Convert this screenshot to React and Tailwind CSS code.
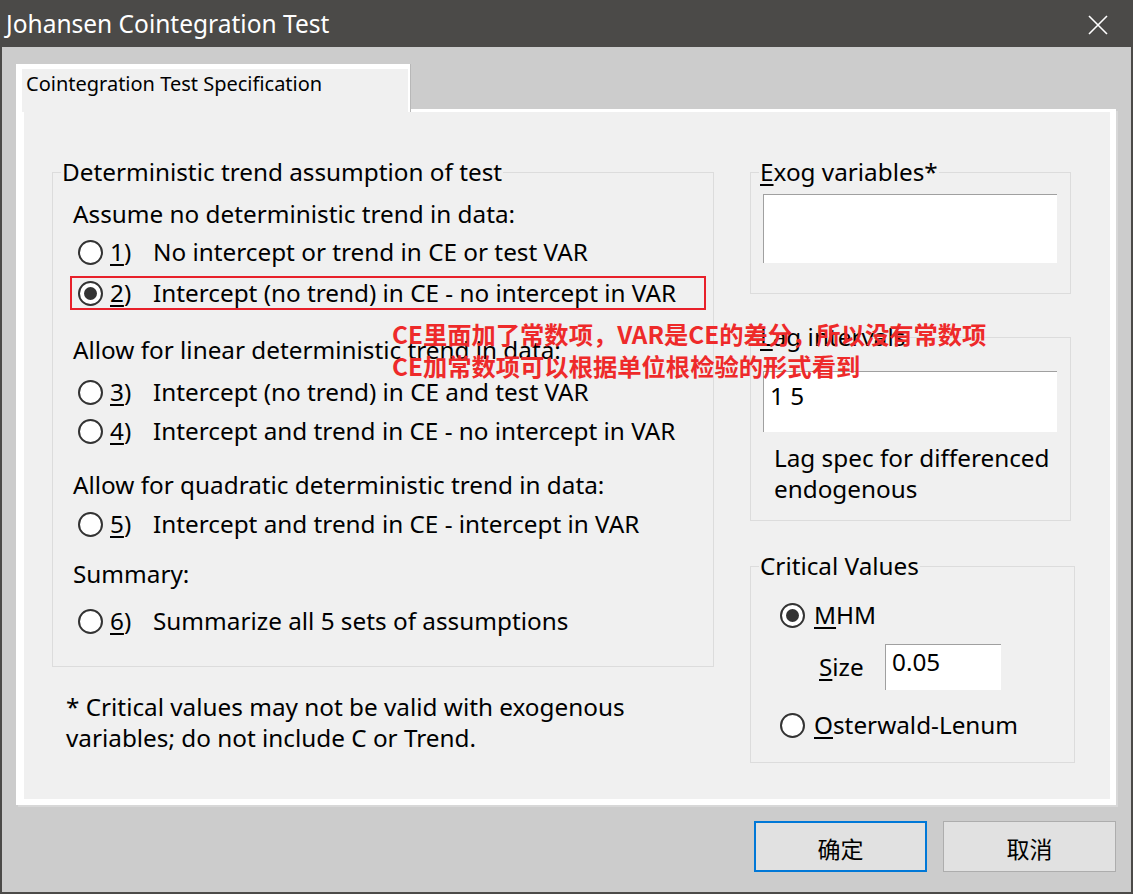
import React from 'react';

const Radio = ({ checked }) => (
  <span className="flex h-[25px] w-[25px] shrink-0 items-center justify-center rounded-full border-2 border-[#333333] bg-white">
    {checked && <span className="h-[13px] w-[13px] rounded-full bg-[#333333]" />}
  </span>
);

const Option = ({ n, label, checked, className = '' }) => (
  <div className={`flex h-[30px] items-center ${className}`}>
    <Radio checked={checked} />
    <span className="ml-[7px] w-[43px]">
      <span className="underline underline-offset-[3px]">{n}</span>)
    </span>
    <span>{label}</span>
  </div>
);

const GroupBox = ({ title, className = '', children }) => (
  <fieldset className={`border border-[#dcdcdc] px-0 ${className}`}>
    <legend className="ml-[8px] h-[30px] px-px leading-[30px]">{title}</legend>
    {children}
  </fieldset>
);

const App = () => {
  return (
    <div className="flex h-[894px] w-[1133px] flex-col bg-[#4b4a48] font-['Noto_Sans','Open_Sans',sans-serif] text-[24.3px] text-black">
      {/* title bar */}
      <div className="flex h-[47px] shrink-0 items-center justify-between pl-[6px] pr-[25px] pt-[2px] text-[24.5px] text-white">
        <span>Johansen Cointegration Test</span>
        <svg width="20" height="20" viewBox="0 0 20 20" stroke="white" strokeWidth="1.6">
          <path d="M1 1 L19 19 M19 1 L1 19" />
        </svg>
      </div>

      <div className="mx-[2px] mb-[2px] flex flex-1 flex-col bg-[#cccccc] pl-[14px] pr-[15px] pt-[17px]">
        {/* tab */}
        <div className="relative z-10 -mb-[3px] h-[48px] w-[394px] border-l-[6px] border-r-2 border-t-[5px] border-white bg-[#f0f0f0] shadow-[1px_0_0_#b8b8b8]">
          <div className="pl-[4px] pt-[1px] text-[20px] leading-[28px]">Cointegration Test Specification</div>
        </div>

        {/* panel */}
        <div className="relative flex h-[696px] border-b-[6px] border-l-[8px] border-r-[6px] border-t-[3px] border-white bg-[#f0f0f0] pl-[28px] pt-[45px] shadow-[2px_2px_0_#d8d8d8]">
          {/* left column */}
          <div className="flex w-[662px] flex-col">
            <GroupBox title="Deterministic trend assumption of test" className="pb-[30px]">
              <div className="ml-[20px] mt-[12px] flex h-[30px] items-center">Assume no deterministic trend in data:</div>
              <Option n="1" label="No intercept or trend in CE or test VAR" className="ml-[25px] mt-[8px]" />
              <div className="ml-[17px] mt-[9px] w-[636px] border-2 border-[#e8202a] pl-[6px]">
                <Option n="2" label="Intercept (no trend) in CE - no intercept in VAR" checked className="h-[29px]" />
              </div>
              <div className="ml-[20px] mt-[25px] flex h-[30px] items-center">Allow for linear deterministic trend in data:</div>
              <Option n="3" label="Intercept (no trend) in CE and test VAR" className="ml-[25px] mt-[12px]" />
              <Option n="4" label="Intercept and trend in CE - no intercept in VAR" className="ml-[25px] mt-[9px]" />
              <div className="ml-[20px] mt-[24px] flex h-[30px] items-center">Allow for quadratic deterministic trend in data:</div>
              <Option n="5" label="Intercept and trend in CE - intercept in VAR" className="ml-[25px] mt-[9px]" />
              <div className="ml-[20px] mt-[20px] flex h-[30px] items-center">Summary:</div>
              <Option n="6" label="Summarize all 5 sets of assumptions" className="ml-[25px] mt-[17px]" />
            </GroupBox>
            <p className="ml-[14px] mt-[24px] leading-[31px]">
              * Critical values may not be valid with exogenous
              <br />
              variables; do not include C or Trend.
            </p>
          </div>

          {/* right column */}
          <div className="ml-[36px] flex flex-col">
            <GroupBox title={<><span className="underline underline-offset-[3px]">E</span>xog variables*</>} className="w-[321px] pb-[30px]">
              <div className="ml-[12px] mt-[7px] h-[69px] w-[294px] border-l border-t border-[#a0a0a0] bg-white" />
            </GroupBox>
            <GroupBox title={<><span className="underline underline-offset-[3px]">L</span>ag intervals</>} className="mt-[28px] w-[321px] pb-[16px]">
              <div className="ml-[12px] mt-[19px] h-[61px] w-[294px] border-l border-t border-[#a0a0a0] bg-white pl-[6px] pt-[9px] leading-[30px]">1 5</div>
              <p className="ml-[23px] mt-[10px] leading-[31px]">
                Lag spec for differenced
                <br />
                endogenous
              </p>
            </GroupBox>
            <GroupBox title="Critical Values" className="mt-[30px] w-[325px] pb-[22px]">
              <div className="ml-[29px] mt-[19px] flex h-[30px] items-center">
                <Radio checked />
                <span className="ml-[9px]"><span className="underline underline-offset-[3px]">M</span>HM</span>
              </div>
              <div className="mt-[14px] flex items-center">
                <span className="ml-[68px] w-[66px]"><span className="underline underline-offset-[3px]">S</span>ize</span>
                <div className="h-[46px] w-[116px] border-l border-t border-[#a0a0a0] bg-white pl-[6px] pt-[2px] leading-[30px]">0.05</div>
              </div>
              <div className="ml-[29px] mt-[20px] flex h-[30px] items-center">
                <Radio />
                <span className="ml-[9px]"><span className="underline underline-offset-[3px]">O</span>sterwald-Lenum</span>
              </div>
            </GroupBox>
          </div>

          {/* annotation overlay */}
          <div className="absolute left-[368px] top-[206px] font-['Noto_Sans_CJK_SC',sans-serif] text-[24.3px] font-bold leading-[32px] text-[#ee2a2a]">
            <div>CE里面加了常数项，VAR是CE的差分，所以没有常数项</div>
            <div>CE加常数项可以根据单位根检验的形式看到</div>
          </div>
        </div>

        {/* buttons */}
        <div className="mt-[16px] flex justify-end gap-[16px]">
          <button className="h-[51px] w-[173px] border-2 border-[#0078d7] bg-[#e1e1e1] pt-[4px] font-['Noto_Sans_CJK_SC',sans-serif] text-[23px]">确定</button>
          <button className="h-[51px] w-[173px] border border-[#adadad] bg-[#e1e1e1] pt-[4px] font-['Noto_Sans_CJK_SC',sans-serif] text-[23px]">取消</button>
        </div>
      </div>
    </div>
  );
};

export default App;
